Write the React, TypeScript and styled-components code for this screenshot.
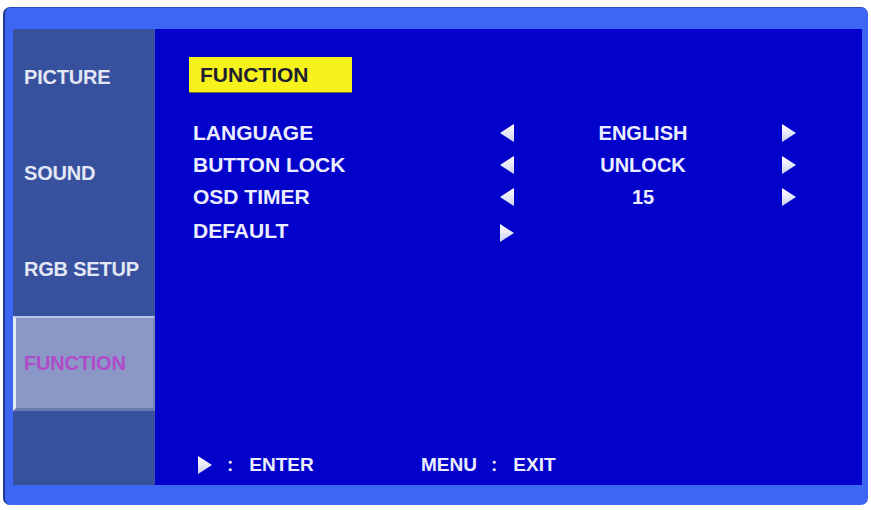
import React from 'react';
import styled, { createGlobalStyle } from 'styled-components';

const GlobalStyle = createGlobalStyle`
    html, body {
        margin: 0;
        padding: 0;
        background: #ffffff;
    }
    body {
        font-family: "Liberation Sans", Arial, sans-serif;
        font-weight: bold;
    }
`;

const Frame = styled.div`
    box-sizing: border-box;
    width: 865px;
    height: 498px;
    margin: 7px 3px 5px 3px;
    padding: 21px 6px 20px 8px;
    background-color: #3d66f4;
    border-radius: 7px;
    border-left: 2px solid #23398f;
    border-top: 1px solid #2e4cc0;
    display: flex;
`;

const Sidebar = styled.div`
    width: 142px;
    flex-shrink: 0;
    background-color: #38519f;
    display: flex;
    flex-direction: column;
`;

const SideItem = styled.div<{ $selected?: boolean }>`
    box-sizing: border-box;
    height: 96px;
    padding-left: 11px;
    display: flex;
    align-items: center;
    font-size: 20px;
    letter-spacing: -0.2px;
    color: #e4e7f4;
    ${({ $selected }) => $selected && `
        color: #b04cc8;
        background-color: #8b97c7;
        border-left: 3px solid #e6ebf8;
        border-top: 2px solid #b8c2e6;
        border-bottom: 3px solid #6c7ab4;
        border-right: 2px solid #7884b8;
        padding-left: 8px;
        height: 95px;
        margin-top: -1px;
    `}
`;

const Main = styled.div`
    flex: 1;
    background-color: #0202cb;
    display: flex;
    flex-direction: column;
    padding-left: 34px;
    color: #eceefe;
`;

const Header = styled.div`
    box-sizing: border-box;
    margin-top: 28px;
    width: 163px;
    height: 36px;
    background-color: #f7f21c;
    border-bottom: 1px solid #6b6a30;
    color: #1e1e30;
    font-size: 21px;
    padding-left: 11px;
    display: flex;
    align-items: center;
`;

const Options = styled.div`
    margin-top: 24px;
    margin-left: 4px;
    display: grid;
    grid-template-columns: 305px 18px 264px 18px;
    grid-auto-rows: 32px;
    align-items: center;
`;

const Label = styled.div<{ $gap?: boolean }>`
    font-size: 21px;
    ${({ $gap }) => $gap && 'margin-top: 4px;'}
`;

const Value = styled.div`
    font-size: 20px;
    text-align: center;
    padding-right: 10px;
`;

const ArrowCell = styled.div<{ $gap?: boolean }>`
    display: flex;
    align-items: center;
    justify-content: center;
    ${({ $gap }) => $gap && 'margin-top: 8px;'}
`;

const Footer = styled.div`
    margin-top: auto;
    margin-bottom: 8px;
    margin-left: 8px;
    height: 24px;
    display: flex;
    align-items: center;
    font-size: 19px;
`;

const FooterGroup = styled.div<{ $width: number }>`
    width: ${({ $width }) => $width}px;
    display: flex;
    align-items: center;
`;

const Colon = styled.span`
    margin: 0 16px 0 14px;
`;

const Arrow = ({ dir }: { dir: 'left' | 'right' }) => (
    <svg width="16" height="20" viewBox="0 0 16 20">
        <defs>
            <linearGradient id={`g-${dir}`} x1="0" y1="0" x2="0" y2="1">
                <stop offset="0" stopColor="#ffffff" />
                <stop offset="1" stopColor="#cdd2ee" />
            </linearGradient>
        </defs>
        {dir === 'left'
            ? <polygon points="15,1 15,19 1,10" fill={`url(#g-${dir})`} />
            : <polygon points="1,1 1,19 15,10" fill={`url(#g-${dir})`} />}
    </svg>
);

const rows = [
    { label: 'LANGUAGE', value: 'ENGLISH' },
    { label: 'BUTTON LOCK', value: 'UNLOCK' },
    { label: 'OSD TIMER', value: '15' },
];

const App = () => (
    <>
        <GlobalStyle />
        <Frame>
            <Sidebar>
                <SideItem>PICTURE</SideItem>
                <SideItem>SOUND</SideItem>
                <SideItem>RGB SETUP</SideItem>
                <SideItem $selected>FUNCTION</SideItem>
            </Sidebar>
            <Main>
                <Header>FUNCTION</Header>
                <Options>
                    {rows.map(row => (
                        <React.Fragment key={row.label}>
                            <Label>{row.label}</Label>
                            <ArrowCell><Arrow dir="left" /></ArrowCell>
                            <Value>{row.value}</Value>
                            <ArrowCell><Arrow dir="right" /></ArrowCell>
                        </React.Fragment>
                    ))}
                    <Label $gap>DEFAULT</Label>
                    <ArrowCell $gap><Arrow dir="right" /></ArrowCell>
                </Options>
                <Footer>
                    <FooterGroup $width={224}>
                        <Arrow dir="right" />
                        <Colon>:</Colon>
                        <span>ENTER</span>
                    </FooterGroup>
                    <FooterGroup $width={200}>
                        <span>MENU</span>
                        <Colon>:</Colon>
                        <span>EXIT</span>
                    </FooterGroup>
                </Footer>
            </Main>
        </Frame>
    </>
);

export default App;
